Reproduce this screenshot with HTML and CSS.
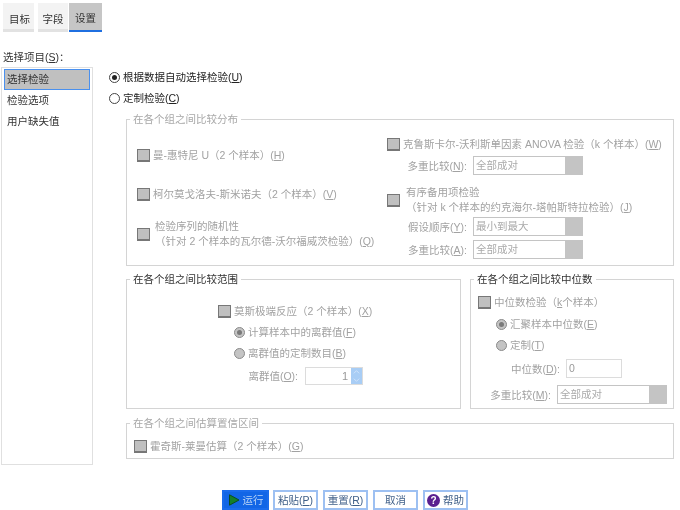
FILE: index.html
```html
<!DOCTYPE html>
<html lang="zh">
<head>
<meta charset="utf-8">
<title>设置</title>
<link rel="stylesheet" href="styles.css">
</head>
<body>
<div class="page">
  <nav class="tabs">
    <div class="tab tab-a">目标</div>
    <div class="tab tab-b">字段</div>
    <div class="tab tab-on">设置</div>
  </nav>
  <div class="main">
    <aside class="side">
      <div class="side-label">选择项目(<u>S</u>)：</div>
      <div class="list">
        <div class="item item-on">选择检验</div>
        <div class="item">检验选项</div>
        <div class="item">用户缺失值</div>
      </div>
    </aside>
    <section class="content">
      <div class="radio-row"><span class="radio on"></span>根据数据自动选择检验(<u>U</u>)</div>
      <div class="radio-row second"><span class="radio"></span>定制检验(<u>C</u>)</div>

      <fieldset class="group g-dist">
        <legend class="off">在各个组之间比较分布</legend>
        <div class="dist-cols">
          <div class="dist-left">
            <div class="check-row r1"><span class="check"></span>曼-惠特尼 U（2 个样本）(<u>H</u>)</div>
            <div class="check-row r2"><span class="check"></span>柯尔莫戈洛夫-斯米诺夫（2 个样本）(<u>V</u>)</div>
            <div class="check-row r3"><span class="check"></span><div class="two-line ind">检验序列的随机性<br>（针对 2 个样本的瓦尔德-沃尔福威茨检验）(<u>Q</u>)</div></div>
          </div>
          <div class="dist-right">
            <div class="check-row r4"><span class="check"></span>克鲁斯卡尔-沃利斯单因素 ANOVA 检验（k 个样本）(<u>W</u>)</div>
            <div class="field-row f1"><label class="lab">多重比较(<u>N</u>):</label><div class="select"><span class="sel-text">全部成对</span><span class="sel-arrow"></span></div></div>
            <div class="check-row r5"><span class="check"></span><div class="two-line ind2">有序备用项检验<br>（针对 k 个样本的约克海尔-塔帕斯特拉检验）(<u>J</u>)</div></div>
            <div class="field-row f2"><label class="lab">假设顺序(<u>Y</u>):</label><div class="select"><span class="sel-text">最小到最大</span><span class="sel-arrow"></span></div></div>
            <div class="field-row f3"><label class="lab">多重比较(<u>A</u>):</label><div class="select"><span class="sel-text">全部成对</span><span class="sel-arrow"></span></div></div>
          </div>
        </div>
      </fieldset>

      <div class="pair">
        <fieldset class="group g-range">
          <legend>在各个组之间比较范围</legend>
          <div class="range-body">
            <div class="check-row m1"><span class="check"></span>莫斯极端反应（2 个样本）(<u>X</u>)</div>
            <div class="sub-row s1"><span class="radio dis on"></span>计算样本中的离群值(<u>F</u>)</div>
            <div class="sub-row s2"><span class="radio dis"></span>离群值的定制数目(<u>B</u>)</div>
            <div class="spin-row"><label class="lab lab-o">离群值(<u>O</u>):</label><div class="spin"><span class="spin-val">1</span><span class="spin-btns"><svg viewBox="0 0 11 9" width="11" height="9"><path d="M2.5 6 L5.5 3 L8.5 6" fill="none" stroke="#d2e4fa" stroke-width="1"/></svg><svg viewBox="0 0 11 9" width="11" height="9"><path d="M2.5 3 L5.5 6 L8.5 3" fill="none" stroke="#d2e4fa" stroke-width="1"/></svg></span></div></div>
          </div>
        </fieldset>
        <fieldset class="group g-med">
          <legend>在各个组之间比较中位数</legend>
          <div class="med-body">
            <div class="check-row q1"><span class="check"></span>中位数检验（<u>k</u> 个样本）</div>
            <div class="sub-row q2"><span class="radio dis on"></span>汇聚样本中位数(<u>E</u>)</div>
            <div class="sub-row q3"><span class="radio dis"></span>定制(<u>T</u>)</div>
            <div class="med-row"><label class="lab lab-d">中位数(<u>D</u>):</label><div class="input">0</div></div>
            <div class="med-row"><label class="lab lab-m">多重比较(<u>M</u>):</label><div class="select"><span class="sel-text">全部成对</span><span class="sel-arrow"></span></div></div>
          </div>
        </fieldset>
      </div>

      <fieldset class="group g-ci">
        <legend class="off">在各个组之间估算置信区间</legend>
        <div class="check-row c1"><span class="check"></span>霍奇斯-莱曼估算（2 个样本）(<u>G</u>)</div>
      </fieldset>
    </section>
  </div>
  <footer class="footer">
    <button class="btn btn-run"><svg class="ic" viewBox="0 0 12 12" width="12" height="12"><path d="M1.5 .8 L11 6 L1.5 11.2 Z" fill="#14802a" stroke="#0d4f22" stroke-width="1"/></svg>运行</button>
    <button class="btn">粘贴(<u>P</u>)</button>
    <button class="btn">重置(<u>R</u>)</button>
    <button class="btn">取消</button>
    <button class="btn btn-help"><span class="help">?</span>帮助</button>
  </footer>
</div>
</body>
</html>
```

FILE: styles.css
```css
* { box-sizing: border-box; }
html, body { margin: 0; padding: 0; background: #fff; }
body { width: 680px; height: 510px; overflow: hidden; }
.page {
  width: 680px; height: 510px; padding-top: 3px;
  font: 10.5px/14px "Liberation Sans", "Noto Sans CJK SC", sans-serif;
  color: #333; filter: blur(.35px);
}
u { text-underline-offset: 1px; }

.tabs { display: flex; height: 29px; padding-left: 3px; }
.tab { display: flex; align-items: center; justify-content: center; padding-top: 6px; background: #f3f3f3; border-bottom: 3px solid #e2e2e2; }
.tab-a { width: 31px; margin-right: 4px; padding-left: 2px; }
.tab-b { width: 30px; margin-right: 1px; }
.tab-on { width: 33px; background: #c6c6c6; border-bottom: 2px solid #1f6fe0; padding-top: 2px; }

.main { display: flex; height: 433px; padding-top: 18px; padding-left: 1px; }
.side { width: 92px; flex: none; }
.side-label { height: 17px; margin-left: 2px; color: #333; }
.list { height: 398px; border: 1px solid #e0e0e0; padding: 1px 2px; }
.item { height: 21px; padding-left: 3px; line-height: 20px; }
.item-on { background: #c0c0c0; border: 1px solid #4a90ee; padding-left: 2px; line-height: 18px; }

.content { width: 571px; margin-left: 16px; padding-top: 20px; }
.radio-row { display: flex; align-items: center; height: 14px; color: #222; }
.radio-row.second { margin-top: 7px; }
.radio { width: 11px; height: 11px; flex: none; margin-right: 3px; border: 1px solid #444; border-radius: 50%; background: #fff; position: relative; }
.radio.on::after { content: ""; position: absolute; left: 2px; top: 2px; width: 5px; height: 5px; border-radius: 50%; background: #222; }
.radio.dis { background: #c4c4c4; border-color: #8a8a8a; }
.radio.dis.on::after { background: #7a7a7a; }

.group { margin: 0 0 0 17px; padding: 0; border: 1px solid #d4d4d4; min-width: 0; color: #a2a2a2; }
.group legend { margin-left: 3px; padding: 0 3px; height: 14px; line-height: 14px; color: #333; }
.group legend.off { color: #a8a8a8; }

.g-dist { width: 548px; height: 154px; margin-top: 7px; }
.dist-cols { display: flex; padding-left: 10px; }
.dist-left { width: 250px; flex: none; }
.check-row { display: flex; align-items: center; }
.check { width: 13px; height: 13px; flex: none; margin-right: 3px; background: #c0c0c0; border: 1px solid #777; border-bottom-width: 2px; }
.two-line { line-height: 15px; }
.ind { margin-left: 2px; }
.ind2 { margin-left: 3px; }
.r1 { margin-top: 22px; }
.r2 { margin-top: 25px; }
.r3 { margin-top: 18px; }
.r4 { margin-top: 11px; white-space: nowrap; }
.r5 { margin-top: 10px; white-space: nowrap; }
.field-row { display: flex; align-items: center; height: 19px; }
.f1 { margin-top: 5px; }
.f2 { margin-top: 2px; }
.f3 { margin-top: 4px; }
.lab { display: block; flex: none; text-align: right; color: #a2a2a2; white-space: nowrap; }
.field-row .lab { width: 60px; margin-left: 20px; margin-right: 6px; }
.select { display: flex; width: 110px; height: 19px; flex: none; border: 1px solid #c4c4c4; background: #fff; }
.sel-text { flex: 1; padding-left: 2px; line-height: 17px; color: #aaa; }
.sel-arrow { width: 17px; background: #c4c4c4; }

.pair { display: flex; gap: 9px; margin-top: 6px; }
.g-range { width: 335px; height: 137px; }
.g-med { width: 204px; height: 137px; margin-left: 0; }
.range-body { margin-left: 91px; }
.med-body { margin-left: 7px; }
.m1 { margin-top: 18px; }
.sub-row { display: flex; align-items: center; margin-left: 16px; height: 14px; }
.s1 { margin-top: 7px; }
.s2 { margin-top: 7px; }
.spin-row { display: flex; align-items: center; height: 18px; margin-top: 7px; }
.lab-o { width: 80px; margin-right: 7px; }
.spin { display: flex; width: 58px; height: 18px; border: 1px solid #dcdcdc; }
.spin-val { flex: 1; text-align: right; padding-right: 3px; line-height: 16px; color: #999; font-size: 11px; }
.spin-btns { width: 11px; display: flex; flex-direction: column; background: #a8cdf5; }
.spin-btns svg { display: block; flex: none; height: 8px; }

.q1 { margin-top: 9px; }
.q2 { margin-top: 8px; margin-left: 18px; }
.q3 { margin-top: 7px; margin-left: 18px; }
.med-row { display: flex; align-items: center; height: 19px; margin-top: 7px; }
.lab-d { width: 82px; margin-right: 6px; }
.lab-m { width: 73px; margin-right: 6px; }
.input { width: 56px; height: 19px; border: 1px solid #dcdcdc; padding-left: 2px; line-height: 17px; color: #999; }

.g-ci { width: 548px; height: 43px; margin-top: 7px; }
.c1 { margin-top: 9px; margin-left: 7px; }

.footer { display: flex; margin-top: 25px; padding-left: 222px; gap: 5px; }
.btn { display: flex; align-items: center; justify-content: center; width: 45px; height: 20px; padding: 0; border: 2px solid #9dc0f2; background: #fff; color: #3f5f88; font: inherit; }
.btn-run { width: 47px; margin-right: -1px; background: #1266e6; border-color: #1a6cec; color: #bcd6f6; }
.ic { margin-right: 3px; }
.help { width: 13px; height: 13px; margin-right: 3px; border-radius: 50%; background: #5a1f90; color: #fff; font-size: 10px; line-height: 13px; font-weight: 700; text-align: center; }
```
